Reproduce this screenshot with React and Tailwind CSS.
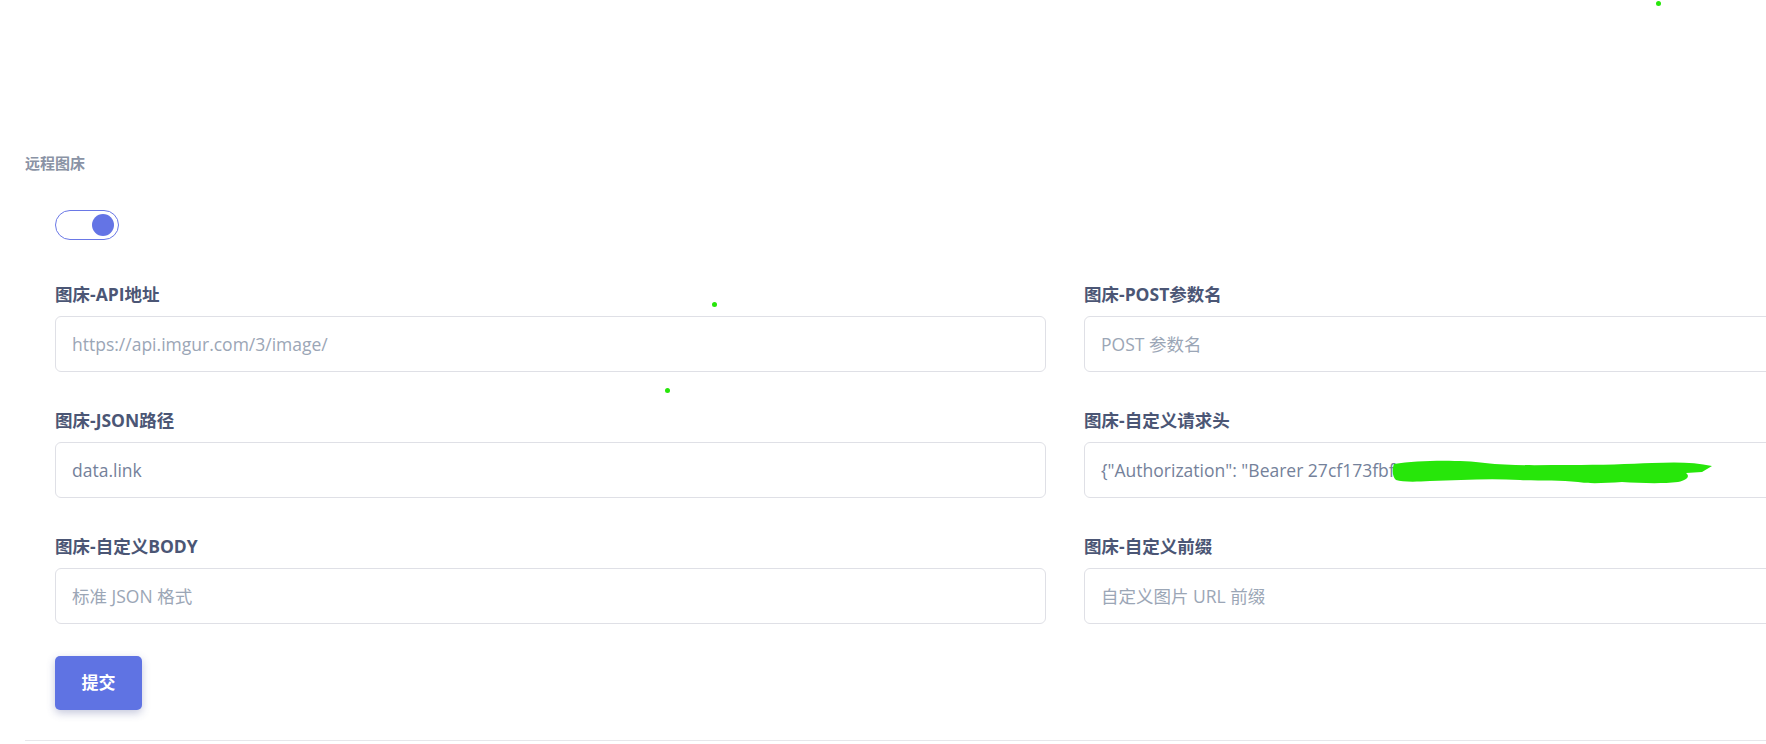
import { useState } from "react";

const FIELDS = [
  { label: "图床-API地址", placeholder: "https://api.imgur.com/3/image/" },
  { label: "图床-POST参数名", placeholder: "POST 参数名" },
  { label: "图床-JSON路径", value: "data.link" },
  { label: "图床-自定义请求头", value: '{"Authorization": "Bearer 27cf173fbf', scribble: true },
  { label: "图床-自定义BODY", placeholder: "标准 JSON 格式" },
  { label: "图床-自定义前缀", placeholder: "自定义图片 URL 前缀" },
];

function Toggle({ on, onChange }) {
  return (
    <button
      type="button"
      onClick={() => onChange(!on)}
      className="flex h-[30px] w-[64px] items-center rounded-full border border-[#6a78e6] bg-white px-[3px]"
    >
      <span
        className={[
          "h-[22px] w-[22px] rounded-full bg-[#6474e5] transition-transform",
          on ? "translate-x-[33px]" : "translate-x-0",
        ].join(" ")}
      />
    </button>
  );
}

function Field({ field }) {
  return (
    <div className="flex flex-col">
      <label className="h-[24px] text-[17.5px] font-bold leading-[24px] text-[#4b5675]">
        {field.label}
      </label>
      <div className="relative mt-[10px]">
        <input
          defaultValue={field.value}
          placeholder={field.placeholder}
          className="h-[56px] w-full rounded-[6px] border border-[#dfe0e6] bg-white px-4 text-[17.5px] text-[#74819a] outline-none placeholder:text-[#9ba6b6]"
        />
        {field.scribble && (
          <svg
            className="pointer-events-none absolute left-[306px] top-[13px]"
            width="326"
            height="34"
            viewBox="0 0 326 34"
          >
            <path
              d="M4 9 C30 5 70 5 95 8 C120 11 150 10 180 10 C210 10 240 9 262 8 C285 7 305 7 322 11 L312 17 L296 18 C300 21 298 25 288 27 C270 29 250 28 232 27 C215 28 200 29 188 27 C170 25 150 26 130 25 C100 23 70 25 40 26 C25 27 12 27 6 25 C2 21 2 14 4 9 Z"
              fill="#27e60a"
            />
          </svg>
        )}
      </div>
    </div>
  );
}

export default function App() {
  const [on, setOn] = useState(true);

  return (
    <div
      className="relative h-[744px] w-screen overflow-hidden bg-white"
      style={{ fontFamily: '"Open Sans", "Noto Sans CJK SC", sans-serif' }}
    >
      {/* stray annotation dots */}
      <span className="absolute left-[1656px] top-[1px] h-[5px] w-[5px] rounded-full bg-[#27e60a]" />
      <span className="absolute left-[712px] top-[302px] h-[5px] w-[5px] rounded-full bg-[#27e60a]" />
      <span className="absolute left-[665px] top-[388px] h-[5px] w-[5px] rounded-full bg-[#27e60a]" />

      <div className="pl-[25px] pt-[153px]">
        <h2 className="h-[20px] text-[15px] font-semibold leading-[20px] text-[#8a93a5]">
          远程图床
        </h2>

        <div className="w-[2100px] pl-[30px]">
          <div className="mt-[37px]">
            <Toggle on={on} onChange={setOn} />
          </div>

          <div className="mt-[42px] grid grid-cols-[991px_991px] gap-x-[38px] gap-y-[36px]">
            {FIELDS.map((f) => (
              <Field key={f.label} field={f} />
            ))}
          </div>

          <button
            type="button"
            className="mt-[32px] h-[54px] w-[87px] rounded-[5px] bg-[#5f73e3] text-[17px] font-bold text-white shadow-[0_3px_8px_rgba(60,70,140,0.3)]"
          >
            提交
          </button>
        </div>

        <div className="mt-[30px] h-px w-[2100px] bg-[#e6e6ea]" />
      </div>
    </div>
  );
}
